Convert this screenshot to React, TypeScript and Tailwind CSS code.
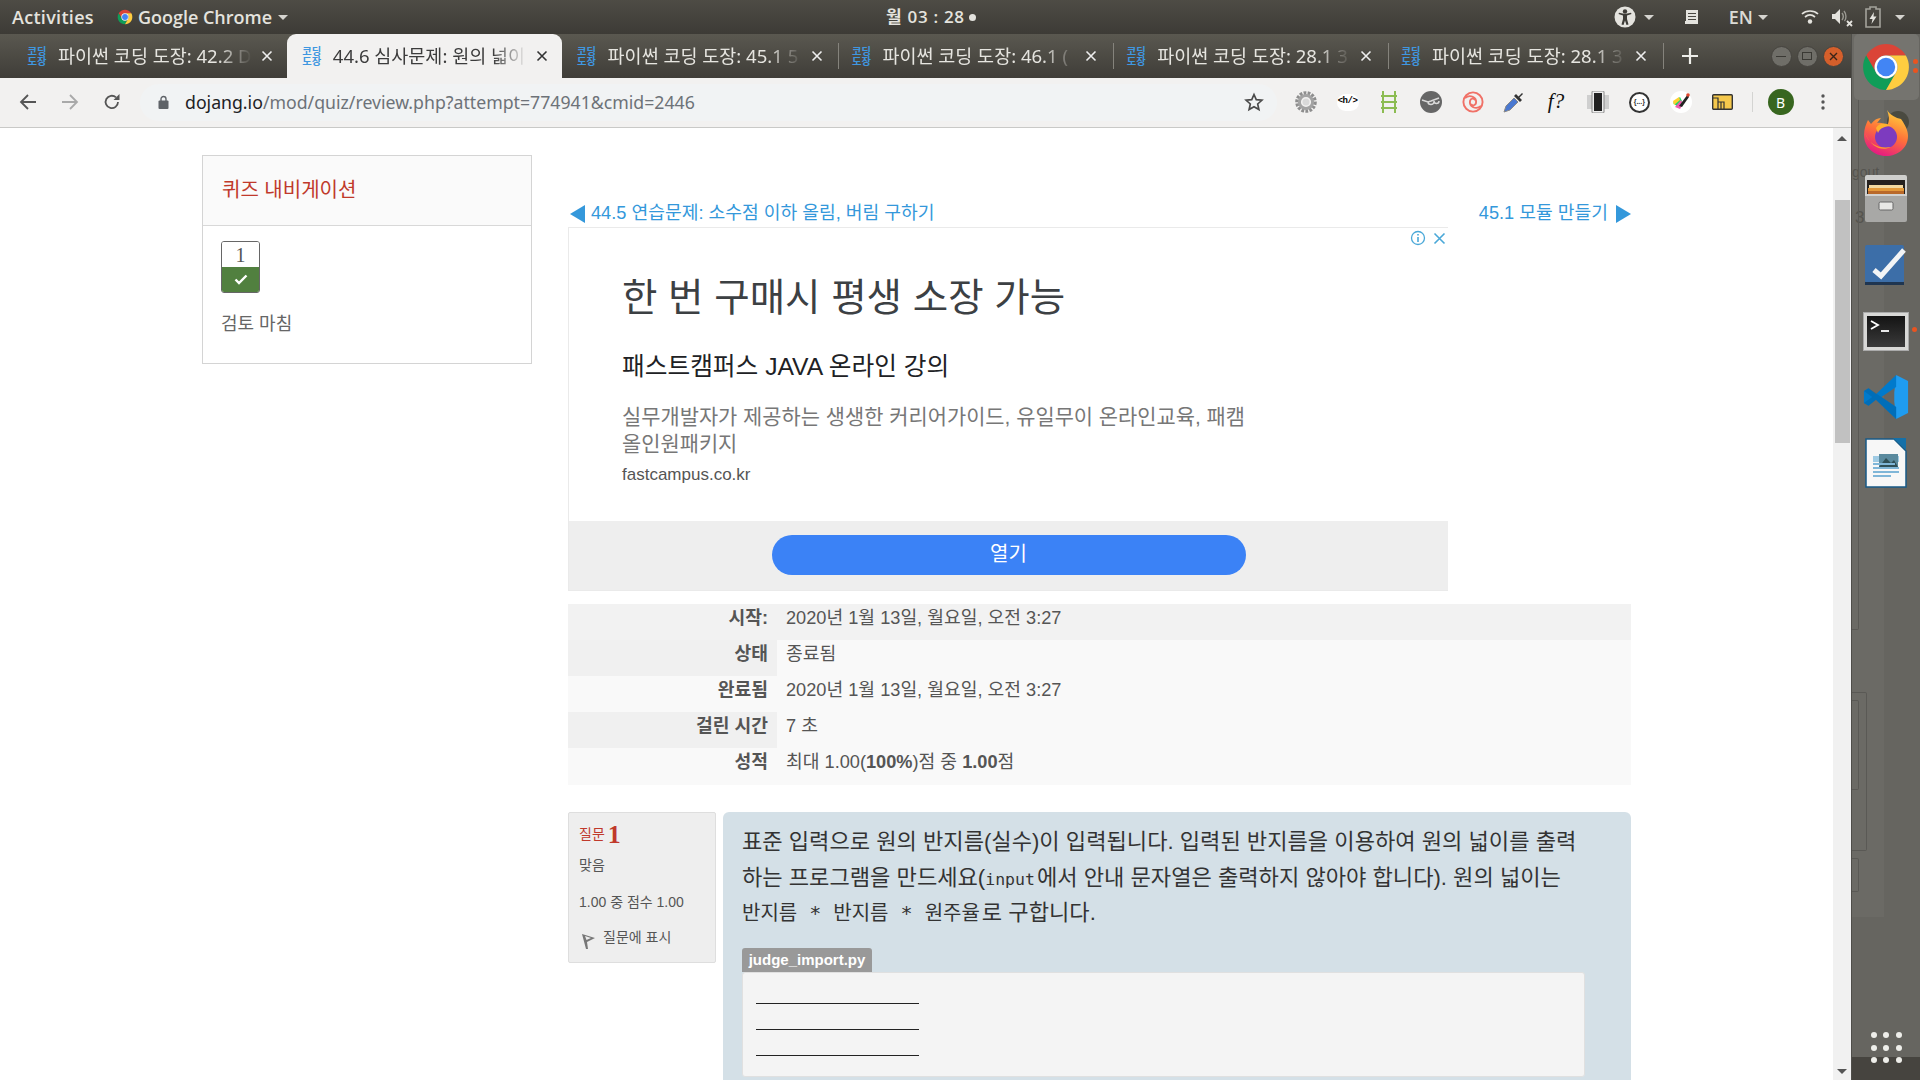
import React from "react";

const KR = "font-['Liberation_Sans','Noto_Sans_CJK_KR',sans-serif]";

function ChromeLogo({ size }: { size: number }) {
  return (
    <svg width={size} height={size} viewBox="0 0 48 48">
      <path fill="#db4437" d="M24 13H43.05A22 22 0 0 0 4.95 13L14.47 29.5A11 11 0 0 1 24 13Z" />
      <path fill="#0f9d58" d="M14.47 29.5L4.95 13A22 22 0 0 0 24 46L33.53 29.5A11 11 0 0 1 14.47 29.5Z" />
      <path fill="#ffcd40" d="M33.53 29.5L24 46A22 22 0 0 0 43.05 13H24A11 11 0 0 1 33.53 29.5Z" />
      <circle cx="24" cy="24" r="11" fill="#fff" />
      <circle cx="24" cy="24" r="8.8" fill="#4285f4" />
    </svg>
  );
}

function Firefox() {
  return (
    <svg width="46" height="48" viewBox="0 0 46 48">
      <defs>
        <linearGradient id="ff" x1="0.7" y1="0" x2="0.3" y2="1">
          <stop offset="0" stopColor="#ffd23c" />
          <stop offset="0.5" stopColor="#ff7139" />
          <stop offset="1" stopColor="#e31587" />
        </linearGradient>
      </defs>
      <circle cx="35" cy="13" r="11" fill="#4a4a40" />
      <path fill="url(#ff)" d="M24 1C27 6 33 9 38 10C43 17 45 22 45 27C45 39 35 47 23 47C11 47 1 38 1 26C1 20 3 15 5 11L8 15C11 11 14 9 18 9L14 14C18 13 22 15 24 17C27 12 26 6 24 1Z" />
      <circle cx="23" cy="28" r="11" fill="#7d3bbf" />
      <path fill="#ff9a2e" d="M2 24C6 36 17 40 28 38C20 42 9 40 2 24Z" />
      <path fill="#ffb02e" d="M13 19C17 13 24 14 28 17C22 17 17 19 15 24Z" />
    </svg>
  );
}

function Cabinet() {
  return (
    <svg width="44" height="48" viewBox="0 0 44 48">
      <rect x="1" y="0" width="42" height="24" rx="2" fill="#cfcfcd" />
      <rect x="3" y="5" width="38" height="19" fill="#25211e" />
      <rect x="5" y="10" width="34" height="3" fill="#f3d9a0" />
      <rect x="4" y="13" width="36" height="3" fill="#e49a3a" />
      <rect x="4" y="16" width="36" height="4" fill="#b9692a" />
      <path d="M1 19H43V45Q43 47 41 47H3Q1 47 1 45Z" fill="#a8a8a6" />
      <path d="M1 19H43V21H1Z" fill="#d2d2d0" />
      <rect x="15" y="27" width="14" height="8" rx="1.5" fill="#e7e7e5" stroke="#666" />
    </svg>
  );
}

function Tasks() {
  return (
    <svg width="42" height="42" viewBox="0 0 42 42">
      <rect x="1" y="1" width="39" height="38" rx="2" fill="#3c6ea8" />
      <rect x="1" y="38" width="39" height="3" fill="#1f3550" />
      <path d="M10 26L17 32L40 6" fill="none" stroke="#f2f4f6" strokeWidth="5" />
    </svg>
  );
}

function Terminal() {
  return (
    <div className="w-[46px] h-[39px] bg-[#d8d8d6] border border-[#aaa] p-[3px]">
      <div className="w-full h-full bg-[linear-gradient(#141414,#3a3a3a)] relative">
        <svg width="38" height="31" viewBox="0 0 38 31">
          <path d="M4 5L11 9L4 13" fill="none" stroke="#fff" strokeWidth="1.8" />
          <path d="M14 15H22" stroke="#fff" strokeWidth="1.8" />
        </svg>
      </div>
    </div>
  );
}

function VSCode() {
  return (
    <svg width="46" height="46" viewBox="0 0 100 100">
      <path fill="#1f9cf0" d="M72 2L98 15V85L72 98L68 60V40Z" />
      <path fill="#007acc" d="M72 2L28 44L12 31L2 37V63L12 69L28 56L72 98V72L40 50L72 28Z" />
      <path fill="#0065a9" d="M2 37L12 31L72 72V98L28 56L12 69L2 63L20 50Z" opacity="0.55" />
    </svg>
  );
}

function Draw() {
  return (
    <svg width="42" height="50" viewBox="0 0 42 50">
      <path d="M1 1H29L41 13V49H1Z" fill="#f7f7f7" stroke="#185a86" strokeWidth="1.5" />
      <path d="M28 0H41V12Z" fill="#1570a8" />
      <rect x="8" y="18" width="26" height="6" fill="#9fcbe4" />
      <rect x="14" y="16" width="19" height="13" fill="#5a8a9e" />
      <path d="M14 29L21 20L26 25L29 22L33 29Z" fill="#2f4f57" />
      <rect x="8" y="25" width="22" height="2" fill="#7fb6d8" />
      <rect x="8" y="29" width="26" height="2" fill="#7fb6d8" />
      <rect x="8" y="33" width="26" height="2" fill="#7fb6d8" />
      <rect x="8" y="37" width="18" height="2" fill="#7fb6d8" />
    </svg>
  );
}

function Caret({ className }: { className?: string }) {
  return <div className={`w-0 h-0 border-x-[5px] border-x-transparent border-t-[5px] border-t-[#d5d4cf] ${className ?? ""}`} />;
}

function Favicon() {
  return (
    <div className="w-[20px] shrink-0 text-[#3f97e0] text-[10.3px] leading-[10px] font-bold text-center font-['Noto_Sans_CJK_KR',sans-serif]">
      <div>코딩</div>
      <div>도장</div>
    </div>
  );
}

function Tab({ title, active, sep }: { title: string; active?: boolean; sep?: boolean }) {
  return (
    <div
      className={`relative w-[274.8px] h-[44px] shrink-0 flex items-center pl-[15px] rounded-t-[9px] ${
        active ? "bg-[#f2f1f0] text-[#3c3c3c]" : "text-[#e6e5e0]"
      }`}
    >
      <Favicon />
      <div className="w-[200px] ml-[11px] overflow-hidden whitespace-nowrap text-[18.5px] leading-[24px] [mask-image:linear-gradient(to_right,black_80%,transparent_97%)]">
        {title}
      </div>
      <svg className="ml-[2px]" width="14" height="14" viewBox="0 0 14 14">
        <path d="M2.5 2.5L11.5 11.5M11.5 2.5L2.5 11.5" stroke={active ? "#333" : "#eee"} strokeWidth="1.6" />
      </svg>
      {sep && <div className="absolute right-[-3px] top-[9px] w-px h-[26px] bg-[#85837c]" />}
    </div>
  );
}

function TbSlot({ children }: { children: React.ReactNode }) {
  return <div className="w-[41.7px] h-[30px] shrink-0 flex items-center justify-center">{children}</div>;
}

const rows: { label: string; value: React.ReactNode; row: string; th: string; h: string }[] = [
  { label: "시작:", value: "2020년 1월 13일, 월요일, 오전 3:27", row: "bg-[#f2f2f2]", th: "bg-[#f2f2f2]", h: "h-[36px]" },
  { label: "상태", value: "종료됨", row: "bg-[#f9f9f9]", th: "bg-[#f0f0f0]", h: "h-[36px]" },
  { label: "완료됨", value: "2020년 1월 13일, 월요일, 오전 3:27", row: "bg-[#f9f9f9]", th: "bg-[#f9f9f9]", h: "h-[36px]" },
  { label: "걸린 시간", value: "7 초", row: "bg-[#f9f9f9]", th: "bg-[#f0f0f0]", h: "h-[36px]" },
  {
    label: "성적",
    value: (
      <>
        최대 1.00(<b>100%</b>)점 중 <b>1.00</b>점
      </>
    ),
    row: "bg-[#f9f9f9]",
    th: "bg-[#f9f9f9]",
    h: "h-[37px]",
  },
];

export default function App() {
  return (
    <div className={`w-[1920px] h-[1080px] overflow-hidden flex flex-col bg-[#666560] ${KR}`}>
      {/* GNOME top bar */}
      <div className="h-[34px] shrink-0 flex items-center bg-[linear-gradient(#4e4c45,#3d3b36)] text-[#e4e3de] font-['Open_Sans','Noto_Sans_CJK_KR',sans-serif] font-semibold text-[18px]">
        <div className="w-[886px] shrink-0 flex items-center pl-[12px]">
          <span className="tracking-[0.3px]">Activities</span>
          <span className="ml-[23px]">
            <ChromeLogo size={16} />
          </span>
          <span className="ml-[5px]">Google Chrome</span>
          <Caret className="ml-[6px]" />
        </div>
        <span className="text-[17px] tracking-[0.7px]">월 03 : 28</span>
        <span className="ml-[4px] w-[7px] h-[7px] rounded-full bg-[#e4e3de]" />
        <div className="ml-[638px] flex items-center">
          <svg width="22" height="22" viewBox="0 0 22 22">
            <circle cx="11" cy="11" r="10.5" fill="#e4e3de" />
            <circle cx="11" cy="5.5" r="2.2" fill="#3d3b36" />
            <path d="M4.5 8L9 9.5V13L7.5 18.5L9.5 19L11 14.5L12.5 19L14.5 18.5L13 13V9.5L17.5 8L17 6.8L11 8L5 6.8Z" fill="#3d3b36" />
          </svg>
          <Caret className="ml-[8px]" />
          <svg className="ml-[30px]" width="16" height="16" viewBox="0 0 16 16">
            <path d="M2 1H14V15H1V12H2Z" fill="#e4e3de" />
            <path d="M4 4.5H12M4 7.5H12M4 10.5H12" stroke="#4a4842" strokeWidth="1" />
          </svg>
          <span className="ml-[29px] text-[#dcdbd6]">EN</span>
          <Caret className="ml-[5px]" />
          <svg className="ml-[33px]" width="18" height="16" viewBox="0 0 18 16">
            <path d="M1 5C5 1 13 1 17 5M4 8C7 5.5 11 5.5 14 8" fill="none" stroke="#e4e3de" strokeWidth="1.7" />
            <circle cx="9" cy="12.5" r="2.2" fill="#e4e3de" />
          </svg>
          <svg className="ml-[12px]" width="22" height="20" viewBox="0 0 22 20">
            <path d="M1 7H4L9 2V17L4 12H1Z" fill="#e4e3de" />
            <path d="M11 6C12.5 8 12.5 11 11 13M13 4C15.5 7 15.5 12 13.5 14" fill="none" stroke="#9a9992" strokeWidth="1.4" />
            <path d="M16 14L21 19M21 14L16 19" stroke="#e4e3de" strokeWidth="1.8" />
          </svg>
          <svg className="ml-[12px]" width="16" height="22" viewBox="0 0 16 22">
            <path d="M5 1H11V3H15V21H1V3H5Z" fill="none" stroke="#a3a29b" strokeWidth="1.6" />
            <path d="M9 6L4.5 13H7.5L6.5 18L11.5 10.5H8.5Z" fill="#e4e3de" />
          </svg>
          <Caret className="ml-[14px]" />
        </div>
      </div>

      <div className="flex-1 flex min-h-0">
        {/* Chrome window */}
        <div className="w-[1852px] shrink-0 flex flex-col border-r border-[#4f4e4a]">
          {/* tab strip */}
          <div className="h-[44px] shrink-0 flex items-center pl-[12px] bg-[linear-gradient(#5a5850,#3f3d38)] font-['Noto_Sans','Noto_Sans_CJK_KR',sans-serif]">
            <Tab title="파이썬 코딩 도장: 42.2 D" />
            <Tab title="44.6 심사문제: 원의 넓이" active />
            <Tab title="파이썬 코딩 도장: 45.1 5" sep />
            <Tab title="파이썬 코딩 도장: 46.1 (" sep />
            <Tab title="파이썬 코딩 도장: 28.1 3" sep />
            <Tab title="파이썬 코딩 도장: 28.1 3" sep />
            <svg className="ml-[20px]" width="18" height="18" viewBox="0 0 18 18">
              <path d="M9 1V17M1 9H17" stroke="#eeeeea" strokeWidth="2.2" />
            </svg>
            <div className="ml-[72px] flex items-center gap-[5px]">
              <div className="w-[21px] h-[21px] rounded-full bg-[#6f6e68] border border-[#45433e] flex items-center justify-center">
                <div className="w-[10px] h-px bg-[#3a3934]" />
              </div>
              <div className="w-[21px] h-[21px] rounded-full bg-[#6f6e68] border border-[#45433e] flex items-center justify-center">
                <div className="w-[10px] h-[8px] border border-[#3a3934]" />
              </div>
              <div className="w-[21px] h-[21px] rounded-full bg-[#d55f2b] border border-[#45433e] flex items-center justify-center">
                <svg width="9" height="9" viewBox="0 0 9 9">
                  <path d="M1 1L8 8M8 1L1 8" stroke="#3a2418" strokeWidth="1.4" />
                </svg>
              </div>
            </div>
          </div>

          {/* toolbar */}
          <div className="h-[50px] shrink-0 flex items-center bg-[#f2f1f0] border-b border-[#c9c9c7] pb-px">
            <div className="w-[140px] shrink-0 flex items-center pl-[19px] gap-[24px]">
              <svg width="18" height="18" viewBox="0 0 18 18">
                <path d="M17 9H2M9 2L2 9L9 16" fill="none" stroke="#555" strokeWidth="1.8" />
              </svg>
              <svg width="18" height="18" viewBox="0 0 18 18">
                <path d="M1 9H16M9 2L16 9L9 16" fill="none" stroke="#a9a9a9" strokeWidth="1.8" />
              </svg>
              <svg width="18" height="18" viewBox="0 0 18 18">
                <path d="M15 9A6.2 6.2 0 1 1 13 4.4" fill="none" stroke="#555" strokeWidth="1.8" />
                <path d="M16.5 1V7H10.5Z" fill="#555" />
              </svg>
            </div>
            <div className="w-[1137px] h-[37px] shrink-0 rounded-full bg-[#f1f3f4] flex items-center pl-[18px]">
              <svg width="11" height="14" viewBox="0 0 11 14">
                <path d="M3 6V4A2.5 2.5 0 0 1 8 4V6" fill="none" stroke="#5f6368" strokeWidth="1.4" />
                <rect x="0.5" y="5.5" width="10" height="8.5" rx="1" fill="#5f6368" />
              </svg>
              <span className="ml-[16px] text-[17.7px] text-[#6d7278] font-['Noto_Sans',sans-serif] whitespace-nowrap">
                <span className="text-[#202124]">dojang.io</span>/mod/quiz/review.php?attempt=774941&cmid=2446
              </span>
              <svg className="ml-auto mr-[13px]" width="20" height="20" viewBox="0 0 24 24">
                <path d="M12 3L14.7 9.2L21.5 9.9L16.4 14.4L17.9 21L12 17.6L6.1 21L7.6 14.4L2.5 9.9L9.3 9.2Z" fill="none" stroke="#4a4a4a" strokeWidth="2" />
              </svg>
            </div>
            <div className="flex items-center ml-[8px]">
              <TbSlot>
                <svg width="22" height="22" viewBox="0 0 22 22">
                  <circle cx="11" cy="11" r="8.6" fill="none" stroke="#8e8e8e" strokeWidth="4.4" strokeDasharray="2.6 1.2" />
                  <circle cx="11" cy="11" r="6.6" fill="none" stroke="#a3a3a3" strokeWidth="3" />
                  <circle cx="11" cy="11" r="3.5" fill="#d9d9d9" />
                </svg>
              </TbSlot>
              <TbSlot>
                <div className="w-[22px] h-[17px] rounded-full bg-white flex items-center justify-center text-[9px] font-bold text-black font-['Liberation_Mono',monospace] tracking-[-0.5px]">
                  {"<h/>"}
                </div>
              </TbSlot>
              <TbSlot>
                <svg width="18" height="22" viewBox="0 0 18 22">
                  <path d="M3 0V22M15 0V22M1 5H17M1 11H17M1 17H17" stroke="#8cbc52" strokeWidth="2" />
                </svg>
              </TbSlot>
              <TbSlot>
                <svg width="22" height="22" viewBox="0 0 22 22">
                  <circle cx="11" cy="11" r="11" fill="#666" />
                  <path d="M2 9L8 11L11 10L19 7M8 11A3 2.5 0 0 0 14 11M14 10A2.5 2.5 0 0 0 19 10" fill="none" stroke="#d9d9d9" strokeWidth="1.5" />
                </svg>
              </TbSlot>
              <TbSlot>
                <svg width="22" height="22" viewBox="0 0 22 22" fill="none" stroke="#f07167" strokeWidth="1.9">
                  <circle cx="11" cy="11" r="9.6" />
                  <path d="M3 7C8 3 15 6 14 12C13.5 15 10 15 9 13M19 15C14 19 7 16 8 10C8.5 7 12 7 13 9" />
                </svg>
              </TbSlot>
              <TbSlot>
                <svg width="22" height="22" viewBox="0 0 22 22">
                  <path d="M1 21L3 15L11 7L15 11L7 19Z" fill="#4a78d0" stroke="#888" />
                  <path d="M11 5L17 11L19 9L16.5 6.5L20 3L19 2L15.5 5.5L13 3Z" fill="#333" />
                </svg>
              </TbSlot>
              <TbSlot>
                <span className="text-[21px] italic font-['Liberation_Serif',serif] text-[#111]">f?</span>
              </TbSlot>
              <TbSlot>
                <svg width="22" height="22" viewBox="0 0 22 22">
                  <rect x="0" y="4" width="22" height="14" fill="#cfcfcf" />
                  <rect x="5" y="0" width="12" height="22" rx="1" fill="#eee" stroke="#888" />
                  <rect x="7" y="2" width="8" height="18" fill="#222" />
                </svg>
              </TbSlot>
              <TbSlot>
                <div className="w-[21px] h-[21px] rounded-full border-2 border-[#333] bg-white flex items-center justify-center text-[7px] font-bold text-[#333]">
                  {"{...}"}
                </div>
              </TbSlot>
              <TbSlot>
                <svg width="22" height="22" viewBox="0 0 22 22">
                  <circle cx="11" cy="11" r="11" fill="#fff" />
                  <path d="M3 12L10 6L12 10L8 16Z" fill="#1fd86a" />
                  <path d="M5 16L11 9L13 13L10 18Z" fill="#f05ab0" />
                  <path d="M3 10L9 6L10 9L4 14Z" fill="#ffd02e" />
                  <path d="M9 15L18 3L19 6L12 16Z" fill="#222" />
                  <circle cx="18" cy="4" r="1.8" fill="#e0452d" />
                </svg>
              </TbSlot>
              <TbSlot>
                <svg width="21" height="16" viewBox="0 0 21 16">
                  <rect x="0.7" y="0.7" width="19.6" height="14.6" rx="1" fill="#f5c84c" stroke="#333" strokeWidth="1.4" />
                  <path d="M1 4H6V15M6 8H12V15M9 8V15" fill="none" stroke="#333" strokeWidth="1.2" />
                </svg>
              </TbSlot>
            </div>
            <div className="ml-[8px] w-px h-[20px] bg-[#d4d4d2]" />
            <div className="ml-[15px] w-[26px] h-[26px] rounded-full bg-[#38661f] text-white text-[14px] flex items-center justify-center font-['Noto_Sans',sans-serif]">
              B
            </div>
            <svg className="ml-[27px]" width="4" height="16" viewBox="0 0 4 16">
              <circle cx="2" cy="2" r="1.7" fill="#555" />
              <circle cx="2" cy="8" r="1.7" fill="#555" />
              <circle cx="2" cy="14" r="1.7" fill="#555" />
            </svg>
          </div>

          {/* viewport */}
          <div className="flex-1 flex min-h-0 bg-white">
            <div className="w-[1833px] shrink-0 overflow-hidden flex items-start pl-[202px] text-[#555]">
              {/* sidebar */}
              <div className="w-[330px] shrink-0 mt-[27px] h-[209px] border border-[#d4d4d4] flex flex-col">
                <div className="h-[70px] shrink-0 bg-[#fafafa] border-b border-[#d8d8d8] pl-[19px] pb-[2px] flex items-center text-[#c0392b] text-[20px]">
                  퀴즈 내비게이션
                </div>
                <div className="pl-[18px] pt-[15px]">
                  <div className="w-[39px] h-[52px] rounded-[3px] border border-[#666] overflow-hidden flex flex-col">
                    <div className="h-[25px] bg-white flex items-center justify-center text-[20px] text-[#555] font-['Liberation_Serif',serif]">1</div>
                    <div className="flex-1 bg-[#51803f] flex items-center justify-center">
                      <svg width="14" height="11" viewBox="0 0 14 11">
                        <path d="M1.5 5.5L5 9L12.5 1.5" fill="none" stroke="#fff" strokeWidth="2.4" />
                      </svg>
                    </div>
                  </div>
                  <div className="mt-[18px] text-[18px] leading-[26px] text-[#666]">검토 마침</div>
                </div>
              </div>

              {/* main */}
              <div className="w-[1063px] shrink-0 ml-[36px] mt-[72px] flex flex-col">
                <div className="h-[27px] pt-[1px] flex items-center justify-between text-[#3498db] text-[18.2px]">
                  <div className="flex items-center">
                    <div className="w-0 h-0 ml-[2px] border-y-[9px] border-y-transparent border-r-[15px] border-r-[#3498db]" />
                    <span className="ml-[6px]">44.5 연습문제: 소수점 이하 올림, 버림 구하기</span>
                  </div>
                  <div className="flex items-center">
                    <span className="mr-[8px]">45.1 모듈 만들기</span>
                    <div className="w-0 h-0 border-y-[9px] border-y-transparent border-l-[15px] border-l-[#3498db]" />
                  </div>
                </div>

                {/* ad */}
                <div className="relative w-[880px] h-[364px] border-y border-l border-[#eaeaea] flex flex-col">
                  <div className="absolute right-[2px] top-[2px] flex items-center gap-[7px]">
                    <svg width="16" height="16" viewBox="0 0 16 16">
                      <circle cx="8" cy="8" r="6.5" fill="none" stroke="#4aa8d8" strokeWidth="1.3" />
                      <path d="M8 7V12M8 4V5.6" stroke="#4aa8d8" strokeWidth="1.6" />
                    </svg>
                    <svg width="13" height="13" viewBox="0 0 13 13">
                      <path d="M1.5 1.5L11.5 11.5M11.5 1.5L1.5 11.5" stroke="#4aa8d8" strokeWidth="1.6" />
                    </svg>
                  </div>
                  <div className="h-[293px] shrink-0 pl-[53px] flex flex-col">
                    <div className="mt-[44px] text-[38.5px] leading-[52px] text-[#3c4043]">한 번 구매시 평생 소장 가능</div>
                    <div className="mt-[26px] text-[24.7px] leading-[34px] text-[#202124]">패스트캠퍼스 JAVA 온라인 강의</div>
                    <div className="mt-[19px] w-[630px] text-[20.9px] leading-[27px] text-[#777]">
                      실무개발자가 제공하는 생생한 커리어가이드, 유일무이 온라인교육, 패캠 올인원패키지
                    </div>
                    <div className="mt-[6px] text-[17px] leading-[24px] text-[#555]">fastcampus.co.kr</div>
                  </div>
                  <div className="flex-1 bg-[#eeeeee] flex justify-center items-center">
                    <div className="w-[474px] h-[40px] mb-[2px] pb-[2px] rounded-full bg-[#3b82f6] text-white text-[20px] flex items-center justify-center">
                      열기
                    </div>
                  </div>
                </div>

                {/* summary table */}
                <div className="mt-[13px] flex flex-col text-[18.2px]">
                  {rows.map((r) => (
                    <div key={r.label} className={`${r.h} flex ${r.row}`}>
                      <div className={`w-[209px] shrink-0 pr-[9px] pt-[1px] text-right font-bold ${r.th}`}>{r.label}</div>
                      <div className="pl-[9px] pt-[1px]">{r.value}</div>
                    </div>
                  ))}
                </div>

                {/* question */}
                <div className="mt-[27px] flex items-start gap-[7px]">
                  <div className="w-[148px] h-[151px] shrink-0 bg-[#eeeeee] border border-[#dedede] rounded-[2px] pl-[10px] pt-[7px] text-[14px]">
                    <div className="h-[28px] flex items-center text-[#c0392b]">
                      질문
                      <span className="ml-[3px] text-[26px] font-bold font-['Liberation_Serif',serif]">1</span>
                    </div>
                    <div className="mt-[7px] h-[20px] leading-[20px]">맞음</div>
                    <div className="mt-[17px] h-[20px] leading-[20px]">1.00 중 점수 1.00</div>
                    <div className="mt-[15px] flex items-start">
                      <svg className="mt-[5px] ml-[2px]" width="15" height="18" viewBox="0 0 15 18">
                        <path d="M1 2L14 6L6 10L7 17L5 17Z" fill="#777" />
                        <path d="M4 4L10 6L5.5 8Z" fill="#eee" />
                      </svg>
                      <span className="ml-[7px]">질문에 표시</span>
                    </div>
                  </div>
                  <div className="flex-1 h-[400px] bg-[#d4e0e7] rounded-[6px] pl-[19px] pt-[12px]">
                    <div className="w-[860px] h-[106.5px] text-[22.1px] leading-[35.5px] text-[#333]">
                      <div className="h-[35.5px] whitespace-nowrap">표준 입력으로 원의 반지름(실수)이 입력됩니다. 입력된 반지름을 이용하여 원의 넓이를 출력</div>
                      <div className="h-[35.5px] whitespace-nowrap">
                        하는 프로그램을 만드세요(<span className="mr-[2px] leading-none font-['DejaVu_Sans_Mono','Noto_Sans_CJK_KR',monospace] text-[16.5px]">input</span>에서 안내 문자열은 출력하지 않아야 합니다). 원의 넓이는
                      </div>
                      <div className="h-[35.5px] whitespace-nowrap">
                        <span className="mr-[2px] leading-none font-['DejaVu_Sans_Mono','Noto_Sans_CJK_KR',monospace] text-[20px]">반지름 * 반지름 * 원주율</span>로 구합니다.
                      </div>
                    </div>
                    <div className="mt-[17.5px] w-[130px] h-[24px] bg-[#999] rounded-t-[3px] text-white font-bold text-[15px] leading-[24px] text-center">
                      judge_import.py
                    </div>
                    <div className="w-[843px] h-[105px] bg-[#f4f4f4] border border-[#e0e0e0] rounded-[3px] pl-[13px] pt-[30px] flex flex-col gap-[25px]">
                      <div className="w-[163px] h-px bg-[#222]" />
                      <div className="w-[163px] h-px bg-[#222]" />
                      <div className="w-[163px] h-px bg-[#222]" />
                    </div>
                  </div>
                </div>
              </div>
            </div>

            {/* scrollbar */}
            <div className="w-[18px] shrink-0 bg-[#f1f1f1] flex flex-col items-center pt-[8px]">
              <div className="w-0 h-0 border-x-[5px] border-x-transparent border-b-[5px] border-b-[#555]" />
              <div className="mt-[59px] ml-[1px] w-[15px] h-[243px] bg-[#c1c1c1]" />
              <div className="mt-auto mb-[6px] w-0 h-0 border-x-[5px] border-x-transparent border-t-[5px] border-t-[#555]" />
            </div>
          </div>
        </div>

        {/* dock */}
        <div className="relative flex-1 flex flex-col items-center overflow-hidden bg-[#666560]">
          <div className="absolute left-0 top-0 bottom-[163px] w-[32px] bg-[#6b6a65]" />
          <div className="absolute left-0 top-[128px] text-[14px] leading-[20px] text-[#55544f]">gout</div>
          <div className="absolute left-[3px] top-[172px] text-[17px] leading-[24px] text-[#55544f]">3</div>
          <div className="absolute left-0 top-[-10px] w-[7px] h-[606px] border border-l-0 border-[#5a5955] rounded-r-[2px]" />
          <div className="absolute left-0 top-[666px] w-[7px] h-[90px] border border-l-0 border-[#5a5955] rounded-r-[2px]" />
          <div className="absolute left-0 top-[658px] w-[15px] h-[159px] border border-l-0 border-[#5a5955] rounded-r-[2px]" />
          <div className="absolute left-0 top-[824px] w-[7px] h-[34px] border border-l-0 border-[#5a5955] rounded-r-[2px]" />
          <div className="absolute left-0 right-0 bottom-0 h-[23px] bg-[#46443f]" />
          <div className="relative w-[65px] h-[66px] shrink-0 flex items-center justify-center rounded-[5px] bg-[#75746f]">
            <ChromeLogo size={50} />
            <div className="absolute right-[1px] top-[25px] w-[5px] h-[5px] rounded-full bg-[#e95420]" />
            <div className="absolute right-[1px] top-[34px] w-[5px] h-[5px] rounded-full bg-[#e95420]" />
          </div>
          <div className="relative h-[66px] shrink-0 flex items-center"><Firefox /></div>
          <div className="relative h-[66px] shrink-0 flex items-center"><Cabinet /></div>
          <div className="relative h-[66px] shrink-0 flex items-center -translate-x-[1px]"><Tasks /></div>
          <div className="relative w-[65px] h-[66px] shrink-0 flex items-center justify-center">
            <Terminal />
            <div className="absolute right-[2px] top-[29px] w-[5px] h-[5px] rounded-full bg-[#e95420]" />
          </div>
          <div className="relative h-[66px] shrink-0 flex items-center"><VSCode /></div>
          <div className="relative h-[66px] shrink-0 flex items-center"><Draw /></div>
          <div className="relative mt-auto mb-[17px] grid grid-cols-3 gap-x-[6.5px] gap-y-[6.5px]">
            {[0, 1, 2, 3, 4, 5, 6, 7, 8].map((i) => (
              <div key={i} className="w-[6px] h-[6px] rounded-full bg-[#eeeeea]" />
            ))}
          </div>
        </div>
      </div>
    </div>
  );
}
